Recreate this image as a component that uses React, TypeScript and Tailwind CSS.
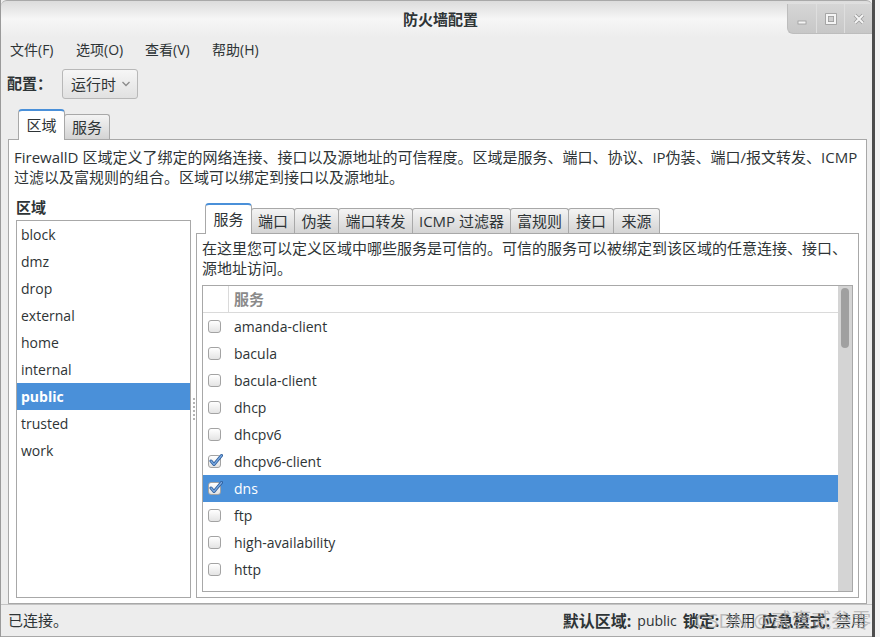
import React from "react";

const zones = ["block", "dmz", "drop", "external", "home", "internal", "public", "trusted", "work"];

const services = [
  { name: "amanda-client" },
  { name: "bacula" },
  { name: "bacula-client" },
  { name: "dhcp" },
  { name: "dhcpv6" },
  { name: "dhcpv6-client", checked: true },
  { name: "dns", checked: true, selected: true },
  { name: "ftp" },
  { name: "high-availability" },
  { name: "http" },
];

const innerTabs = [
  { label: "服务", w: "w-[47px]", active: true },
  { label: "端口", w: "w-[44px]" },
  { label: "伪装", w: "w-[45px]" },
  { label: "端口转发", w: "w-[75px]" },
  { label: "ICMP 过滤器", w: "w-[99px]" },
  { label: "富规则", w: "w-[59px]" },
  { label: "接口", w: "w-[46px]" },
  { label: "来源", w: "w-[47px]" },
];

function Tab({ label, w, active }: { label: string; w: string; active?: boolean }) {
  if (active) {
    return (
      <div
        className={`${w} relative z-10 -mb-px h-[31px] flex items-center justify-center bg-white border border-b-0 border-[#a8a8a8] border-t-2 border-t-[#4a90d9] rounded-t-[4px] text-[15px]`}
      >
        {label}
      </div>
    );
  }
  return (
    <div
      className={`${w} -ml-px h-[25px] flex items-center justify-center bg-gradient-to-b from-[#f4f4f4] to-[#d4d4d4] border border-b-0 border-[#a8a8a8] rounded-t-[3px] text-[15px]`}
    >
      {label}
    </div>
  );
}

function CheckBox({ checked }: { checked?: boolean }) {
  return (
    <span className="relative block w-[13px] h-[13px] rounded-[3px] border border-[#a3a3a3] bg-gradient-to-b from-white to-[#e4e4e4]">
      {checked && (
        <svg className="absolute -top-[3px] left-0" width="14" height="14" viewBox="0 0 14 14">
          <path d="M2 8 L5 11.5 L12.5 2.5" fill="none" stroke="#2f5f9c" strokeWidth="3" strokeLinecap="round" strokeLinejoin="round" />
          <path d="M2 8 L5 11.5 L12.5 2.5" fill="none" stroke="#7aaae3" strokeWidth="1.2" strokeLinecap="round" strokeLinejoin="round" />
        </svg>
      )}
    </span>
  );
}

function WinButton({ children }: { children: React.ReactNode }) {
  return (
    <div className="w-[28px] h-full flex items-center justify-center border-l border-[#dedede] first:border-l-0">
      {children}
    </div>
  );
}

export default function App() {
  return (
    <div className="w-[880px] h-[637px] flex overflow-hidden bg-white text-[#2e3436] font-['Open_Sans','Noto_Sans_CJK_SC',sans-serif]">
      <div className="w-[872px] h-full flex flex-col bg-[#ededed] border-l border-[#9a9a9a]">
        {/* Title bar */}
        <div className="relative h-[37px] shrink-0 flex items-center justify-center pl-[8px] border-t border-[#a9a9a9] rounded-t-[6px] bg-gradient-to-b from-[#dcdcdc] via-[#f6f6f6] to-[#ededed]">
          <span className="text-[15px] font-bold">防火墙配置</span>
          <div className="absolute right-0 top-[3px] h-[30px] flex overflow-hidden rounded-bl-[6px] border-l border-b border-[#bdbdbd] bg-gradient-to-b from-[#d6d6d6] to-[#c7c7c7]">
            <WinButton>
              <svg width="12" height="12" viewBox="0 0 12 12">
                <rect x="2" y="8" width="8" height="3" fill="#f4f4f4" stroke="#9c9c9c" strokeWidth="0.8" />
              </svg>
            </WinButton>
            <WinButton>
              <svg width="12" height="12" viewBox="0 0 12 12">
                <rect x="2" y="2" width="8" height="8" fill="none" stroke="#9c9c9c" strokeWidth="3.6" />
                <rect x="2" y="2" width="8" height="8" fill="none" stroke="#f4f4f4" strokeWidth="2" />
              </svg>
            </WinButton>
            <WinButton>
              <svg width="12" height="12" viewBox="0 0 12 12">
                <path d="M2 2 L10 10 M10 2 L2 10" stroke="#9c9c9c" strokeWidth="3.6" />
                <path d="M2 2 L10 10 M10 2 L2 10" stroke="#f4f4f4" strokeWidth="2" />
              </svg>
            </WinButton>
          </div>
        </div>

        {/* Menu bar */}
        <div className="h-[24px] shrink-0 flex items-center pl-[9px] text-[14px]">
          <span className="w-[66px]">文件(F)</span>
          <span className="w-[69px]">选项(O)</span>
          <span className="w-[67px]">查看(V)</span>
          <span>帮助(H)</span>
        </div>

        {/* Configuration selector */}
        <div className="h-[50px] shrink-0 flex items-start pt-[8px] pl-[6px]">
          <div className="h-[28px] flex items-center w-[55px] text-[15px] font-bold">配置：</div>
          <div className="w-[76px] h-[30px] flex items-center justify-between pl-[8px] pr-[6px] rounded-[3px] border border-[#b8b8b8] bg-gradient-to-b from-[#f6f6f6] to-[#e1e1e1] text-[15px]">
            <span>运行时</span>
            <svg width="10" height="8" viewBox="0 0 10 8">
              <path d="M1.5 2 L5 5.5 L8.5 2" fill="none" stroke="#8a8a8a" strokeWidth="1.3" />
            </svg>
          </div>
        </div>

        {/* Outer notebook tabs */}
        <div className="h-[28px] shrink-0 flex items-end pl-[17px]">
          <Tab label="区域" w="w-[47px]" active />
          <Tab label="服务" w="w-[46px]" />
        </div>

        {/* Outer notebook page */}
        <div className="flex-1 min-h-0 ml-[7px] mr-[5px] flex flex-col bg-white border border-[#a8a8a8] pt-[7px] pb-[5px]">
          <div className="pl-[5px] text-[15px] leading-[20px] whitespace-nowrap">
            <div>FirewallD 区域定义了绑定的网络连接、接口以及源地址的可信程度。区域是服务、端口、协议、IP伪装、端口/报文转发、ICMP</div>
            <div>过滤以及富规则的组合。区域可以绑定到接口以及源地址。</div>
          </div>

          <div className="flex-1 min-h-0 mt-[11px] flex px-[7px]">
            {/* Zones */}
            <div className="w-[175px] flex flex-col">
              <div className="h-[22px] text-[15px] font-bold leading-[19px]">区域</div>
              <div className="flex-1 border border-[#a8a8a8] bg-white overflow-hidden">
                {zones.map((z) => (
                  <div
                    key={z}
                    className={
                      z === "public"
                        ? "h-[27px] flex items-center pl-[4px] text-[14px] font-bold text-white bg-[#4a90d9]"
                        : "h-[27px] flex items-center pl-[4px] text-[14px]"
                    }
                  >
                    {z}
                  </div>
                ))}
              </div>
            </div>

            {/* Splitter */}
            <div className="w-[5px] flex flex-col items-center justify-center gap-[2px] pt-[21px]">
              {[0, 1, 2, 3, 4, 5].map((i) => (
                <span key={i} className="w-[2px] h-[2px] bg-[#b4b4b4]" />
              ))}
            </div>

            {/* Inner notebook */}
            <div className="flex-1 flex flex-col pt-[5px]">
              <div className="h-[30px] flex items-end pl-[9px]">
                {innerTabs.map((t) => (
                  <Tab key={t.label} label={t.label} w={t.w} active={t.active} />
                ))}
              </div>
              <div className="flex-1 min-h-0 flex flex-col border border-[#a8a8a8] bg-white pt-[4px] pb-[5px] px-[5px]">
                <div className="text-[15px] leading-[20px] whitespace-nowrap">
                  <div>在这里您可以定义区域中哪些服务是可信的。可信的服务可以被绑定到该区域的任意连接、接口、</div>
                  <div>源地址访问。</div>
                </div>
                <div className="flex-1 min-h-0 mt-[7px] flex border border-[#a8a8a8] overflow-hidden">
                  <div className="flex-1 flex flex-col">
                    <div className="h-[27px] shrink-0 flex border-b border-[#dadada]">
                      <div className="w-[26px] border-r border-[#dadada]" />
                      <div className="flex items-center pl-[5px] text-[15px] font-bold text-[#8a8a8a]">服务</div>
                    </div>
                    {services.map((s) => (
                      <div
                        key={s.name}
                        className={
                          s.selected
                            ? "h-[27px] shrink-0 flex items-center bg-[#4a90d9] text-white text-[14px]"
                            : "h-[27px] shrink-0 flex items-center text-[14px]"
                        }
                      >
                        <div className="w-[31px] pl-[5px]">
                          <CheckBox checked={s.checked} />
                        </div>
                        <span>{s.name}</span>
                      </div>
                    ))}
                  </div>
                  <div className="w-[14px] bg-[#d4d4d4] pt-[2px] pl-[3px]">
                    <div className="w-[8px] h-[60px] rounded-full bg-[#a0a0a0]" />
                  </div>
                </div>
              </div>
            </div>
          </div>
        </div>

        {/* Status bar */}
        <div className="relative h-[33px] shrink-0 flex items-center justify-between pl-[7px] pr-[6px] border-t border-[#c4c4c4] border-b border-b-[#a8a8a8] text-[15px]">
          <span>已连接。</span>
          <span className="flex items-center gap-[6px]">
            <b className="text-[16px]">默认区域:</b>
            <span className="text-[14px]">public</span>
            <b className="text-[16px]">锁定:</b>
            <span>禁用</span>
            <b className="text-[16px]">应急模式:</b>
            <span>禁用</span>
          </span>
          <span className="absolute left-[694px] top-[1px] text-[20px] text-[#a6a6a6]/70 whitespace-nowrap">CSDN @贰壹贰叁零</span>
        </div>
      </div>
      <div className="w-[3px] h-full bg-[#4d4d4d]" />
      <div className="flex-1 h-full bg-[#f4f4f4]" />
    </div>
  );
}
